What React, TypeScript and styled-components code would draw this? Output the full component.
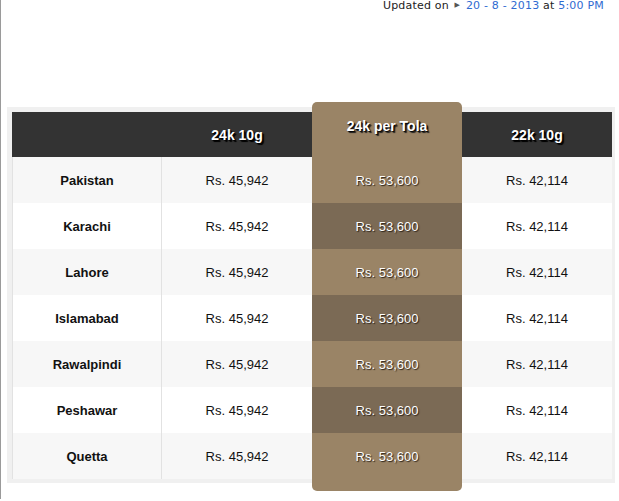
import React from 'react';
import styled, { createGlobalStyle } from 'styled-components';

type Rate = { city: string; g24: string; tola: string; g22: string };

const rates: Rate[] = [
  { city: 'Pakistan', g24: 'Rs. 45,942', tola: 'Rs. 53,600', g22: 'Rs. 42,114' },
  { city: 'Karachi', g24: 'Rs. 45,942', tola: 'Rs. 53,600', g22: 'Rs. 42,114' },
  { city: 'Lahore', g24: 'Rs. 45,942', tola: 'Rs. 53,600', g22: 'Rs. 42,114' },
  { city: 'Islamabad', g24: 'Rs. 45,942', tola: 'Rs. 53,600', g22: 'Rs. 42,114' },
  { city: 'Rawalpindi', g24: 'Rs. 45,942', tola: 'Rs. 53,600', g22: 'Rs. 42,114' },
  { city: 'Peshawar', g24: 'Rs. 45,942', tola: 'Rs. 53,600', g22: 'Rs. 42,114' },
  { city: 'Quetta', g24: 'Rs. 45,942', tola: 'Rs. 53,600', g22: 'Rs. 42,114' },
];

const GlobalStyle = createGlobalStyle`
  html, body {
    margin: 0;
    padding: 0;
    background: #fff;
  }
  body {
    font-family: "Liberation Sans", Arial, sans-serif;
    overflow: hidden;
  }
`;

const App: React.FC = () => {
  return (
    <>
      <GlobalStyle />
      <Page>
        <Updated>
          Updated on <Arrow>&#9654;</Arrow> <Link>20 - 8 - 2013</Link> at <Link>5:00 PM</Link>
        </Updated>
        <TableWrap>
          <Column>
            <HeadCell />
            {rates.map((r, i) => (
              <Cell key={r.city} odd={i % 2 === 0} bold divider>
                {r.city}
              </Cell>
            ))}
          </Column>
          <Column>
            <HeadCell>24k 10g</HeadCell>
            {rates.map((r, i) => (
              <Cell key={r.city} odd={i % 2 === 0}>
                {r.g24}
              </Cell>
            ))}
          </Column>
          <HighlightColumn>
            <HighlightHead>24k per Tola</HighlightHead>
            {rates.map((r, i) => (
              <HighlightCell key={r.city} dark={i % 2 === 1}>
                {r.tola}
              </HighlightCell>
            ))}
          </HighlightColumn>
          <Column>
            <HeadCell>22k 10g</HeadCell>
            {rates.map((r, i) => (
              <Cell key={r.city} odd={i % 2 === 0}>
                {r.g22}
              </Cell>
            ))}
          </Column>
        </TableWrap>
      </Page>
    </>
  );
};

const Page = styled.div`
  min-height: 100vh;
  box-sizing: border-box;
  border-left: 1px solid #9a9a9a;
  padding: 0 0 0 6px;
`;

const Updated = styled.div`
  height: 12px;
  margin-top: -2px;
  padding-right: 15px;
  text-align: right;
  font-family: "DejaVu Sans", Verdana, sans-serif;
  font-size: 11px;
  letter-spacing: 0.2px;
  line-height: 14px;
  color: #222;
`;

const Arrow = styled.span`
  font-size: 7px;
  color: #555;
  vertical-align: 2px;
  margin: 0 2px;
`;

const Link = styled.span`
  color: #2f6bd1;
`;

const TableWrap = styled.div`
  display: flex;
  align-items: flex-start;
  width: 608px;
  box-sizing: border-box;
  margin-top: 97px;
  padding: 5px 3px 4px 5px;
  background: #f0f0f0;
`;

const Column = styled.div`
  display: flex;
  flex-direction: column;
  width: 150px;
`;

const HeadCell = styled.div`
  height: 45px;
  display: flex;
  align-items: center;
  justify-content: center;
  background: #333333;
  color: #fff;
  font-weight: bold;
  font-size: 14px;
  text-shadow: 1px 1px 1px #000, 2px 2px 1px #000;
`;

const Cell = styled.div<{ odd?: boolean; bold?: boolean; divider?: boolean }>`
  height: 46px;
  display: flex;
  align-items: center;
  justify-content: center;
  box-sizing: border-box;
  background: ${(p) => (p.odd ? '#f7f7f7' : '#ffffff')};
  color: #111;
  font-size: 13px;
  font-weight: ${(p) => (p.bold ? 'bold' : 'normal')};
  border-left: ${(p) => (p.divider ? '1px solid #e2e2e2' : 'none')};
  border-right: ${(p) => (p.divider ? '1px solid #e2e2e2' : 'none')};
`;

const HighlightColumn = styled.div`
  display: flex;
  flex-direction: column;
  width: 150px;
  margin: -10px 0 -12px;
  padding-bottom: 12px;
  border-radius: 5px;
  overflow: hidden;
  background: #9a8466;
  color: #fff;
`;

const HighlightHead = styled.div`
  height: 55px;
  box-sizing: border-box;
  padding-top: 16px;
  text-align: center;
  font-weight: bold;
  font-size: 14px;
  line-height: 16px;
  text-shadow: 1px 1px 1px #000, 2px 2px 1px #222;
`;

const HighlightCell = styled.div<{ dark?: boolean }>`
  height: 46px;
  display: flex;
  align-items: center;
  justify-content: center;
  background: ${(p) => (p.dark ? '#7b6a55' : '#9a8466')};
  font-size: 13px;
  text-shadow: 1px 1px 1px #2a2118;
`;

export default App;
